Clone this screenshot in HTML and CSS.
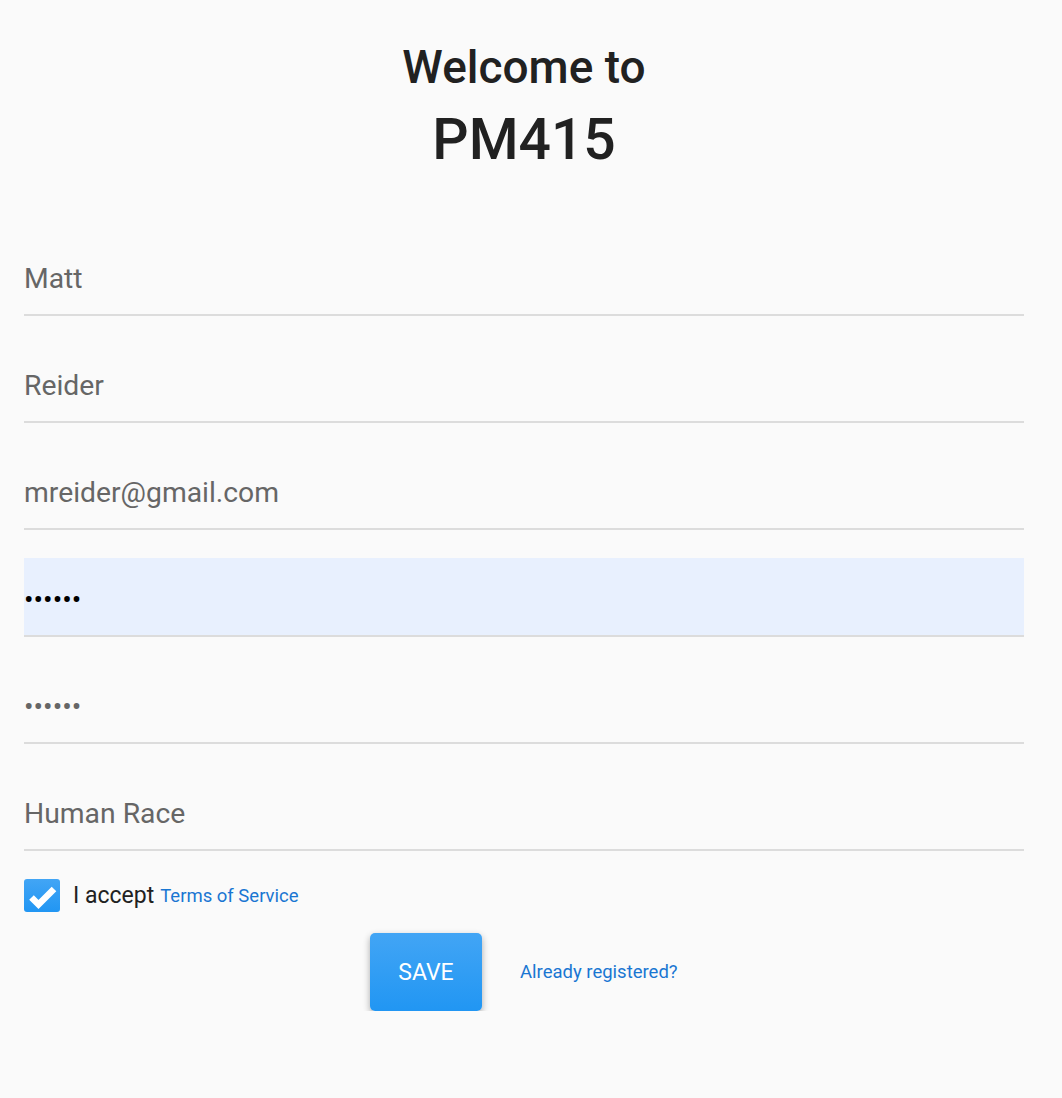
FILE: index.html
```html
<!DOCTYPE html>
<html>
<head>
<meta charset="utf-8">
<link rel="stylesheet" href="styles.css">
</head>
<body>
<div class="page">
  <h1 class="title">
    <span class="welcome">Welcome to</span>
    <span class="brand">PM415</span>
  </h1>
  <form class="form">
    <div class="field"><input class="input" type="text" value="Matt"></div>
    <div class="field"><input class="input" type="text" value="Reider"></div>
    <div class="field"><input class="input" type="text" value="mreider@gmail.com"></div>
    <div class="field"><input class="input autofill" type="password" value="secret"></div>
    <div class="field"><input class="input" type="password" value="secret"></div>
    <div class="field"><input class="input" type="text" value="Human Race"></div>
    <label class="accept">
      <span class="checkbox">
        <svg viewBox="0 0 36 33" width="36" height="33"><path d="M7.5 18.5 L14.5 25.5 L30 10" fill="none" stroke="#fff" stroke-width="6.5" stroke-linecap="butt" stroke-linejoin="miter"/></svg>
      </span>
      <span class="accept-text">I accept</span>
      <a class="link terms" href="#">Terms of Service</a>
    </label>
    <div class="actions">
      <button type="button" class="save">SAVE</button>
      <a class="link already" href="#">Already registered?</a>
    </div>
  </form>
</div>
</body>
</html>
```

FILE: styles.css
```css
html, body {
  margin: 0;
  padding: 0;
  background: #fafafa;
  font-family: Roboto, "Liberation Sans", sans-serif;
}
.page {
  width: 1000px;
  margin: 0 auto 0 24px;
  padding-top: 39px;
}
.title {
  margin: 0;
  display: flex;
  flex-direction: column;
  align-items: center;
  font-weight: 500;
  color: #212121;
}
.welcome {
  font-size: 46px;
  line-height: 56px;
}
.brand {
  font-size: 57px;
  line-height: 72px;
  margin-top: 9px;
}
.form {
  margin-top: 61px;
}
.field {
  margin-bottom: 28px;
  border-bottom: 2px solid #dcdcdc;
}
.input {
  display: block;
  width: 100%;
  box-sizing: border-box;
  height: 77px;
  border: 0;
  padding: 5px 0 0 0;
  margin: 0;
  background: transparent;
  font-family: Roboto, "Liberation Sans", sans-serif;
  font-size: 28.3px;
  color: #666;
  outline: none;
}
.input.autofill {
  background: #e8f0fe;
  color: #000;
}
.accept {
  display: flex;
  align-items: center;
  margin-top: 2px;
  height: 33px;
}
.checkbox {
  width: 36px;
  height: 33px;
  border-radius: 3px;
  background: linear-gradient(#42a5f5, #2196f3);
  display: flex;
}
.accept-text {
  margin-left: 13px;
  font-size: 23px;
  color: #212121;
}
.link {
  color: #1976d2;
  text-decoration: none;
}
.terms {
  margin-left: 6px;
  font-size: 18.5px;
}
.actions {
  display: flex;
  align-items: center;
  margin-top: 21px;
  padding-left: 346px;
}
.save {
  width: 112px;
  height: 78px;
  border: 0;
  border-radius: 5px;
  background: linear-gradient(#42a5f5, #2196f3);
  color: #fff;
  font-family: Roboto, "Liberation Sans", sans-serif;
  font-size: 23px;
  box-shadow: 0 3px 7px rgba(0,0,0,0.32);
}
.already {
  margin-left: 38px;
  font-size: 18.5px;
}
```
